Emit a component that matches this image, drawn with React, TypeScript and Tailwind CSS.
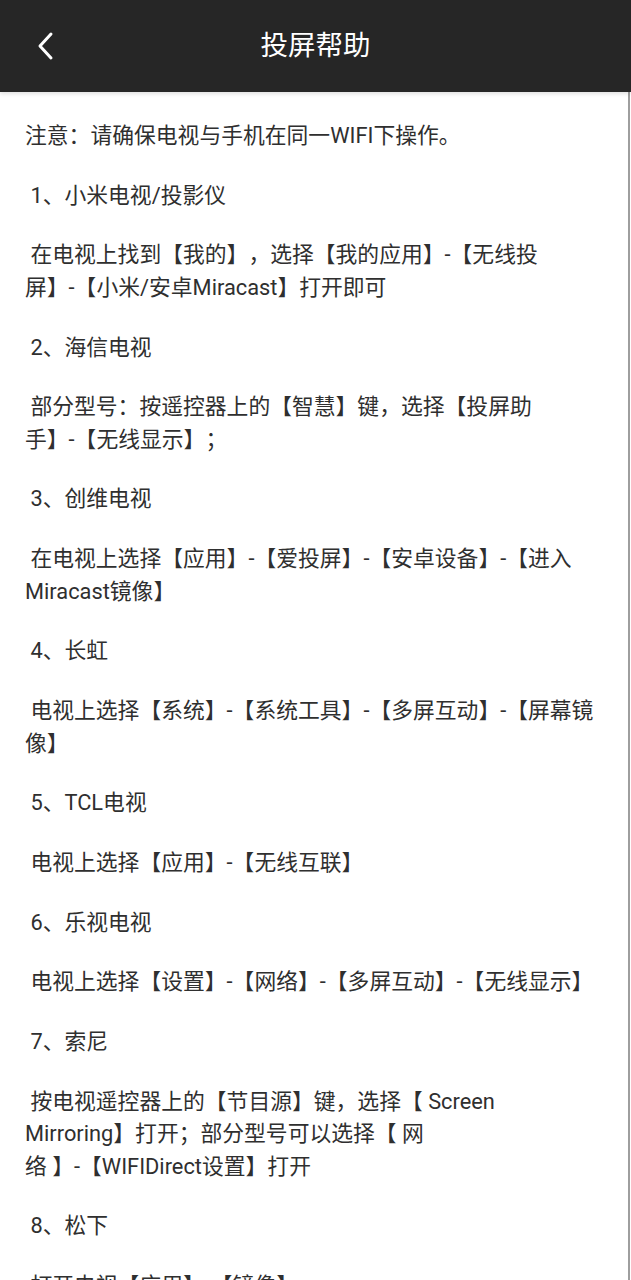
const paragraphs: string[][] = [
  ["注意：请确保电视与手机在同一WIFI下操作。"],
  [" 1、小米电视/投影仪"],
  [" 在电视上找到【我的】，选择【我的应用】-【无线投", "屏】-【小米/安卓Miracast】打开即可"],
  [" 2、海信电视"],
  [" 部分型号：按遥控器上的【智慧】键，选择【投屏助", "手】-【无线显示】；"],
  [" 3、创维电视"],
  [" 在电视上选择【应用】-【爱投屏】-【安卓设备】-【进入", "Miracast镜像】"],
  [" 4、长虹"],
  [" 电视上选择【系统】-【系统工具】-【多屏互动】-【屏幕镜", "像】"],
  [" 5、TCL电视"],
  [" 电视上选择【应用】-【无线互联】"],
  [" 6、乐视电视"],
  [" 电视上选择【设置】-【网络】-【多屏互动】-【无线显示】"],
  [" 7、索尼"],
  [" 按电视遥控器上的【节目源】键，选择【 Screen", "Mirroring】打开；部分型号可以选择【 网", "络 】-【WIFIDirect设置】打开"],
  [" 8、松下"],
  [" 打开电视【应用】-【镜像】"],
];

export default function App() {
  return (
    <div className="relative h-[1280px] overflow-hidden bg-white font-['Roboto','Noto_Sans_CJK_SC',sans-serif]">
      {/* Header */}
      <header className="relative z-10 flex h-[92px] items-center justify-center bg-[#262626] shadow-[0_2px_4px_rgba(0,0,0,0.12)]">
        <button className="absolute left-[28px] top-[28px] flex h-[36px] w-[36px] items-center justify-center">
          <svg width="20" height="30" viewBox="0 0 20 30" fill="none">
            <path d="M15 3 L4 15 L15 27" stroke="white" strokeWidth="3" strokeLinecap="round" strokeLinejoin="round" />
          </svg>
        </button>
        <h1 className="text-[27.5px] text-white">投屏帮助</h1>
      </header>

      {/* Help text */}
      <div className="px-[25px] pt-[28px] text-[21.8px] leading-[32.5px] text-[#2f2f2f] whitespace-pre [text-spacing-trim:space-all]">
        {paragraphs.map((lines, i) => (
          <p key={i} className="mb-[27.2px]">
            {lines.map((line, j) => (
              <span key={j} className="block">
                {line}
              </span>
            ))}
          </p>
        ))}
      </div>

      {/* scrollbar */}
      <div className="absolute right-[1px] top-[92px] bottom-0 w-[2px] bg-[#9e9e9e]" />
    </div>
  );
}
